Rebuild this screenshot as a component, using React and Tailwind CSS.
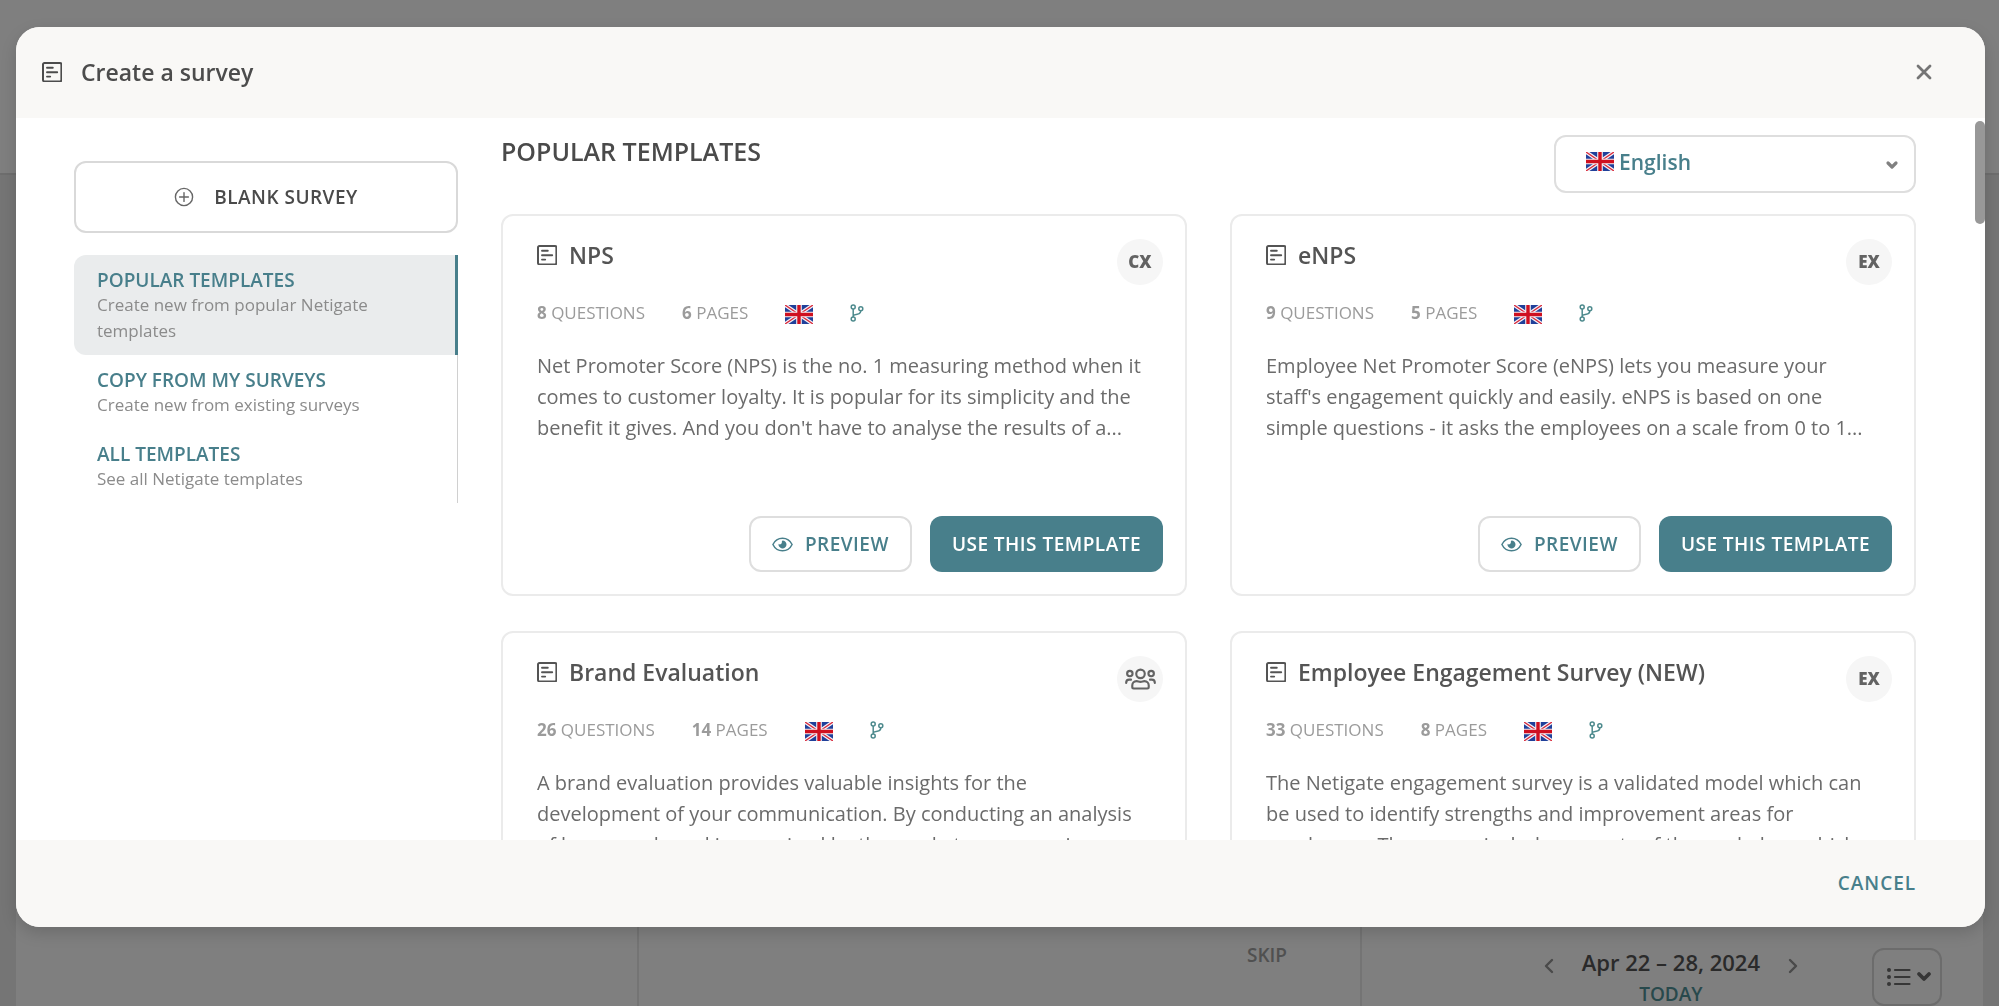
import React from "react";

function SurveyIcon() {
  return (
    <svg width="20" height="20" viewBox="0 0 20 20" fill="none" stroke="currentColor" className="shrink-0" aria-hidden="true">
      <rect x="1" y="1" width="18.4" height="18.4" rx="1.4" strokeWidth="2" />
      <path d="M5 5.700h5.800M5 10.200h10.200M5 14.600h3.200" strokeWidth="1.900" strokeLinecap="round" />
    </svg>
  );
}

function PlusCircle() {
  return (
    <svg width="20" height="20" viewBox="0 0 20 20" fill="none" stroke="currentColor" className="shrink-0 text-[#666666]" aria-hidden="true">
      <circle cx="10" cy="10" r="8.600" strokeWidth="1.400" />
      <path d="M10 5.600v8.800M5.600 10h8.800" strokeWidth="1.400" strokeLinecap="round" />
    </svg>
  );
}

function Flag() {
  return (
    <svg width="28" height="19" viewBox="0 0 28 19" className="block shrink-0" role="img" aria-label="English">
      <rect width="28" height="19" fill="#20409a" />
      <path d="M0 0L28 19M28 0L0 19" stroke="#f4f1f6" strokeWidth="3.800" />
      <path d="M0 0L28 19M28 0L0 19" stroke="#d8283a" strokeWidth="1.300" />
      <path d="M14 0V19M0 9.500H28" stroke="#f4f1f6" strokeWidth="5.600" />
      <path d="M14 0V19M0 9.500H28" stroke="#cf1020" strokeWidth="3.400" />
    </svg>
  );
}

function BranchIcon() {
  return (
    <svg width="14" height="18" viewBox="0 0 14 18" fill="none" stroke="currentColor" strokeWidth="1.500" className="shrink-0 text-[#4d8a8d]" aria-hidden="true">
      <circle cx="3.200" cy="3" r="2" />
      <circle cx="10.800" cy="4.800" r="2" />
      <circle cx="3.200" cy="15" r="2" />
      <path d="M3.200 5v8M10.800 6.800c0 2.500-1.300 3.200-3.600 3.400-2 .2-3.400.4-4 1.400" />
    </svg>
  );
}

function EyeIcon() {
  return (
    <svg width="21" height="15" viewBox="0 0 21 15" fill="none" stroke="currentColor" className="shrink-0" aria-hidden="true">
      <path d="M.9 7.500C2.800 3.600 6.300 1.200 10.500 1.200s7.700 2.400 9.600 6.300c-1.900 3.900-5.400 6.300-9.600 6.300S2.800 11.400.9 7.500z" strokeWidth="1.500" strokeLinejoin="round" />
      <path d="M10.500 3.500a4 4 0 1 1-3.900 3.200 1.900 1.900 0 0 0 3.200-1.900 3.500 3.500 0 0 1 .7-1.300z" fill="currentColor" stroke="none" />
    </svg>
  );
}

function UsersIcon() {
  return (
    <svg width="31" height="22" viewBox="0 0 32 22" fill="none" stroke="currentColor" strokeWidth="2.200" strokeLinecap="round" strokeLinejoin="round" aria-hidden="true">
      <circle cx="16" cy="5.700" r="4.400" />
      <circle cx="5" cy="5.400" r="2.800" />
      <circle cx="27" cy="5.400" r="2.800" />
      <path d="M12 13.200c1.500 0 2.200.7 4 .7s2.500-.7 4-.7c2.900 0 4.500 2.100 4.500 4.500v1.600c0 .9-.6 1.500-1.500 1.500H9c-.9 0-1.500-.6-1.500-1.500v-1.600c0-2.400 1.600-4.500 4.500-4.500z" />
      <path d="M1.200 15c0-2 1.300-3.300 3.100-3.300h1.900M30.800 15c0-2-1.300-3.300-3.100-3.300h-1.900" />
    </svg>
  );
}

function Chevron({ d, width, height, strokeWidth = 3 }) {
  return (
    <svg width={width} height={height} viewBox={`0 0 ${width} ${height}`} fill="none" stroke="currentColor" strokeWidth={strokeWidth} strokeLinecap="round" strokeLinejoin="round" aria-hidden="true">
      <path d={d} />
    </svg>
  );
}

const NAV = [
  { title: "POPULAR TEMPLATES", text: "Create new from popular Netigate templates", active: true },
  { title: "COPY FROM MY SURVEYS", text: "Create new from existing surveys" },
  { title: "ALL TEMPLATES", text: "See all Netigate templates" },
];

const TEMPLATES = [
  {
    title: "NPS",
    badge: "CX",
    questions: 8,
    pages: 6,
    actions: true,
    text: "Net Promoter Score (NPS) is the no. 1 measuring method when it comes to customer loyalty. It is popular for its simplicity and the benefit it gives. And you don't have to analyse the results of a...",
  },
  {
    title: "eNPS",
    badge: "EX",
    questions: 9,
    pages: 5,
    actions: true,
    text: "Employee Net Promoter Score (eNPS) lets you measure your staff's engagement quickly and easily. eNPS is based on one simple questions - it asks the employees on a scale from 0 to 1...",
  },
  {
    title: "Brand Evaluation",
    badge: null,
    questions: 26,
    pages: 14,
    text: "A brand evaluation provides valuable insights for the development of your communication. By conducting an analysis of how your brand is perceived by the market you can gain",
  },
  {
    title: "Employee Engagement Survey (NEW)",
    badge: "EX",
    questions: 33,
    pages: 8,
    text: "The Netigate engagement survey is a validated model which can be used to identify strengths and improvement areas for employees. The survey includes aspects of the workplace which",
  },
];

function TemplateCard({ template }) {
  return (
    <article className="flex min-h-[382px] flex-col rounded-xl border-2 border-[#ebebeb] bg-white pt-[23px] pr-[22px] pb-[22px] pl-[34px]">
      <div className="flex items-start justify-between">
        <h3 className="flex items-center gap-3 text-[23px] leading-8 font-semibold text-[#545454]">
          <SurveyIcon />
          {template.title}
        </h3>
        <span className="flex size-[46px] items-center justify-center rounded-full bg-[#f6f6f6] text-[17px] font-extrabold text-[#636363]">
          {template.badge || <UsersIcon />}
        </span>
      </div>
      <div className="mt-3 flex h-8 items-center gap-[37px] text-[17px] text-[#9b9b9b]">
        <span><b>{template.questions}</b> QUESTIONS</span>
        <span><b>{template.pages}</b> PAGES</span>
        <span className="pt-0.5"><Flag /></span>
        <BranchIcon />
      </div>
      <p className="mt-[21px] mb-auto pr-3 text-xl leading-[31px] text-[#6b6b6b]">{template.text}</p>
      {template.actions && (
        <div className="flex justify-end gap-[18px] text-[19px] font-semibold tracking-wide">
          <button type="button" className="flex h-14 items-center gap-3 rounded-xl border-2 border-[#dedede] px-[21px] text-[#487f8b]">
            <EyeIcon />
            PREVIEW
          </button>
          <button type="button" className="h-14 rounded-xl bg-[#487f8b] px-[22px] text-white">USE THIS TEMPLATE</button>
        </div>
      )}
    </article>
  );
}

function PageBehind() {
  return (
    <div className="flex h-[calc(100vh-1px)] flex-col bg-[#757575]">
      <div className="h-[175px] border-b-2 border-[#6e6e6e] bg-[#7f7f7f]" />
      <div className="mx-4 grid flex-1 grid-cols-[621fr_725fr_621fr] items-stretch bg-[#7f7f7f]">
        <div />
        <div className="flex items-end justify-end border-x-2 border-[#747474] pr-[73px] pb-[37px]">
          <button type="button" className="text-[19px] leading-7 font-semibold text-[#505050]">SKIP</button>
        </div>
        <div className="flex items-end justify-end gap-[72px] pr-[41px]">
          <div className="flex items-start gap-[26px] text-[#4a4a4a]">
            <button type="button" aria-label="Previous week" className="pt-[15px]"><Chevron width={14} height={18} d="M10 3L4 9l6 6" strokeWidth={2.4} /></button>
            <div className="flex flex-col items-center">
              <span className="text-[22px] leading-10 font-semibold text-[#2a2a2a]">Apr 22 – 28, 2024</span>
              <a href="#today" className="text-[19px] leading-6 font-semibold text-[#28494c]">TODAY</a>
            </div>
            <button type="button" aria-label="Next week" className="pt-[15px]"><Chevron width={14} height={18} d="M4 3l6 6-6 6" strokeWidth={2.4} /></button>
          </div>
          <button type="button" aria-label="List view" className="flex h-[58px] w-[70px] items-center justify-center gap-1 rounded-xl border-2 border-[#6c6c6c] pl-1 text-[#363636]">
            <svg width="26" height="20" viewBox="0 0 26 20" fill="currentColor" stroke="currentColor" aria-hidden="true">
              <path d="M9 3h14.500M9 10h14.500M9 17h14.500" strokeWidth="2.200" strokeLinecap="round" />
              <circle cx="3" cy="3" r="2" stroke="none" /><circle cx="3" cy="10" r="2" stroke="none" /><circle cx="3" cy="17" r="2" stroke="none" />
            </svg>
            <Chevron width={16} height={12} d="M3 3l5 5 5-5" strokeWidth={3.8} />
          </button>
        </div>
      </div>
    </div>
  );
}

export default function App() {
  return (
    <div className="h-screen overflow-hidden bg-white font-['Open_Sans',sans-serif]">
      <PageBehind />
      <div className="fixed inset-0 flex flex-col pt-[27px] pr-[14px] pb-20 pl-4">
        <section role="dialog" aria-label="Create a survey" className="flex min-h-0 flex-1 flex-col overflow-hidden rounded-3xl bg-white shadow-[0_6px_16px_rgba(0,0,0,0.15)]">
          <header className="flex h-[91px] shrink-0 items-center justify-between bg-[#f9f8f6] pr-[51px] pb-0.5 pl-[26px] text-[#4c4c4c]">
            <h1 className="flex items-center gap-[19px] text-[23px] leading-8 font-semibold"><SurveyIcon />Create a survey</h1>
            <button type="button" aria-label="Close" className="text-[#757575]">
              <Chevron width={20} height={20} d="M4 4l12 12M16 4L4 16" strokeWidth={2.8} />
            </button>
          </header>

          <div className="relative flex min-h-0 flex-1 gap-[43px] overflow-hidden pr-[69px] pl-[58px]">
            <aside className="w-[384px] shrink-0 pt-[43px]">
              <button type="button" className="flex h-[72px] w-full items-center justify-center gap-5 rounded-xl border-2 border-[#d9d9d9] text-[19px] font-semibold tracking-wide text-[#4a4a4a]">
                <PlusCircle />
                BLANK SURVEY
              </button>
              <nav className="mt-[22px]">
                {NAV.map((item) => (
                  <a
                    key={item.title}
                    href="#templates"
                    className={
                      item.active
                        ? "block rounded-l-xl border-r-[3px] border-[#487f8b] bg-[#eaeced] px-[23px] pt-[13px] pb-[11px]"
                        : "block border-r border-[#d0d0d0] px-[23px] pt-[13px] pb-[11px]"
                    }
                  >
                    <span className="block text-[19px] leading-6 font-semibold text-[#487f8b]">{item.title}</span>
                    <span className="block text-[17px] leading-[26px] text-[#8b8b8b]">{item.text}</span>
                  </a>
                ))}
              </nav>
            </aside>

            <main className="min-w-0 flex-1 pt-[17px]">
              <div className="flex items-start justify-between">
                <h2 className="text-[25px] leading-8 font-semibold text-[#4a4a4a]">POPULAR TEMPLATES</h2>
                <div className="relative w-[362px] text-[#487f8b]">
                  <select aria-label="Language" className="h-[58px] w-full appearance-none rounded-xl border-2 border-[#dedede] bg-white pb-0.5 pl-[63px] text-[21px] font-semibold">
                    <option>English</option>
                  </select>
                  <span className="pointer-events-none absolute top-[17px] left-8"><Flag /></span>
                  <span className="pointer-events-none absolute top-6 right-4 text-[#808080]"><Chevron width={16} height={12} d="M4 4l4 4 4-4" strokeWidth={3.2} /></span>
                </div>
              </div>
              <div className="mt-[21px] grid grid-cols-2 gap-x-[43px] gap-y-[35px]">
                {TEMPLATES.map((template) => (
                  <TemplateCard key={template.title} template={template} />
                ))}
              </div>
            </main>
            <div className="absolute top-[3px] right-0 h-[103px] w-[10px] rounded-full bg-[#989898]" />
          </div>

          <footer className="flex h-[87px] shrink-0 items-center justify-end bg-[#f9f8f6] pr-[69px]">
            <button type="button" className="text-[19px] font-semibold tracking-wider text-[#487f8b]">CANCEL</button>
          </footer>
        </section>
      </div>
    </div>
  );
}
